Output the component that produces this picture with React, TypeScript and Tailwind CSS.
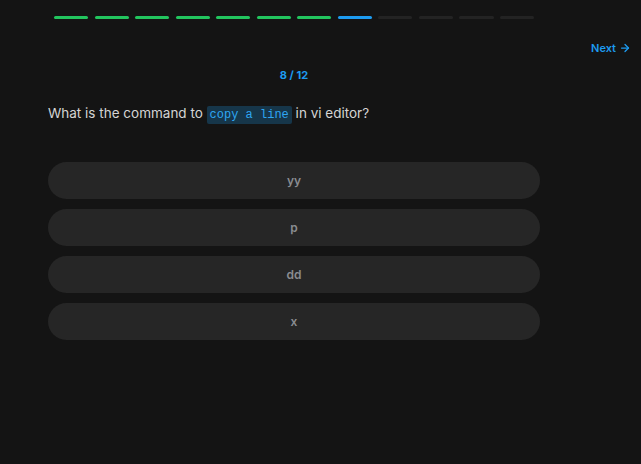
import React from "react";

const steps = Array.from({ length: 12 }, (_, i) => i);

export default function App() {
  return (
    <div className="min-h-[464px] w-full bg-[#141414] font-['Inter',sans-serif]">
      <div className="ml-12 flex w-[492px] justify-center pt-4">
        <div className="flex w-[480px] gap-[6.5px]">
          {steps.map((i) => (
            <div
              key={i}
              className={
                i < 7
                  ? "h-[3px] flex-1 rounded-full bg-[#22c55e]"
                  : i === 7
                  ? "h-[3px] flex-1 rounded-full bg-[#1d9bf0]"
                  : "h-[3px] flex-1 rounded-full bg-[#232323]"
              }
            />
          ))}
        </div>
      </div>
      <div className="flex justify-end pr-[10px] pt-[22px]">
        <button className="flex items-center gap-[3px] text-[11px] font-semibold leading-[14px] text-[#1d9bf0]">
          Next
          <svg width="12" height="12" viewBox="0 0 24 24" fill="none" stroke="currentColor" strokeWidth="2.5" strokeLinecap="round" strokeLinejoin="round">
            <path d="M5 12h14" />
            <path d="m12 5 7 7-7 7" />
          </svg>
        </button>
      </div>
      <div className="ml-12 w-[492px]">
        <div className="pt-[13px] text-center text-[11px] font-bold leading-[14px] text-[#1d9bf0]">
          8 / 12
        </div>
        <div className="mt-[21px] text-[13.5px] leading-[20px] text-[#d4d4d4]">
          What is the command to{" "}
          <code className="rounded-[2px] bg-[#16364a] px-[3px] py-[2px] font-['Liberation_Mono',monospace] text-[12px] text-[#2ea6f2]">
            copy a line
          </code>{" "}
          in vi editor?
        </div>
        <div className="mt-[37px] flex flex-col gap-[10px]">
          {["yy", "p", "dd", "x"].map((o) => (
            <button
              key={o}
              className="h-[37px] w-full rounded-full bg-[#262626] text-[12px] font-semibold text-[#8a8c91]"
            >
              {o}
            </button>
          ))}
        </div>
      </div>
    </div>
  );
}
